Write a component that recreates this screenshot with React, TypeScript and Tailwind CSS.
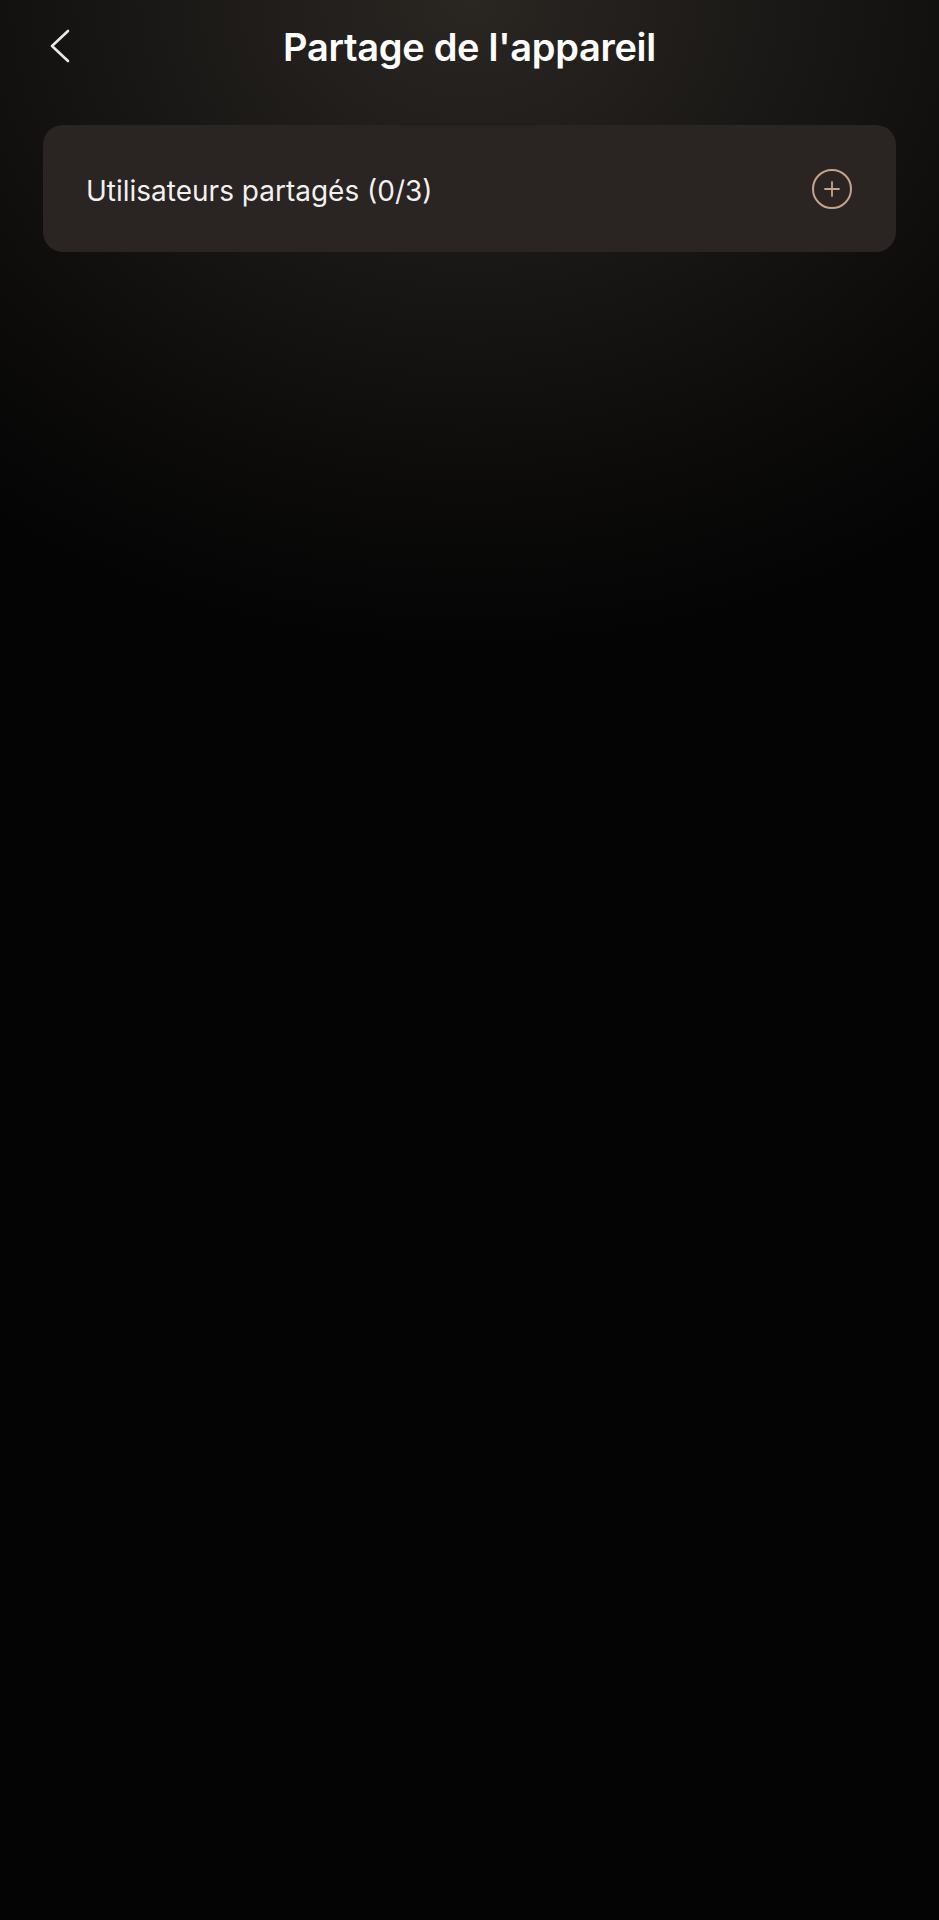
import React from "react";

function ChevronLeft() {
  return (
    <svg width="22" height="34" viewBox="0 0 22 34" fill="none" stroke="currentColor" strokeWidth="2.6" strokeLinecap="round" strokeLinejoin="round">
      <path d="M19 2L3 17l16 15" />
    </svg>
  );
}

function PlusCircle() {
  return (
    <svg width="42" height="42" viewBox="0 0 42 42" fill="none" stroke="#c9a383" strokeWidth="2" strokeLinecap="round">
      <circle cx="21" cy="21" r="19" />
      <path d="M21 14v14M14 21h14" strokeWidth="1.8" />
    </svg>
  );
}

export default function App() {
  return (
    <div
      className="min-h-[1920px] w-full bg-[#040404] bg-[radial-gradient(ellipse_85%_34%_at_50%_0%,#2a2622_0%,#1a1816_40%,#0c0b0a_75%,#040404_100%)] text-white"
      style={{ fontFamily: "Inter, 'Noto Sans', sans-serif" }}
    >
      {/* Header */}
      <div className="relative flex h-[94px] items-center justify-center">
        <button className="absolute left-[49px] top-[29px] text-white/90" aria-label="Retour">
          <ChevronLeft />
        </button>
        <h1 className="text-[38px] font-semibold tracking-[-0.3px] text-white">Partage de l'appareil</h1>
      </div>

      {/* Card */}
      <div className="px-[43px] pt-[31px]">
        <div className="flex h-[127px] items-center justify-between rounded-[20px] bg-[#2a2523] pl-[43px] pr-[43px]">
          <span className="pt-[4px] text-[28px] text-white/95">Utilisateurs partagés (0/3)</span>
          <PlusCircle />
        </div>
      </div>
    </div>
  );
}
